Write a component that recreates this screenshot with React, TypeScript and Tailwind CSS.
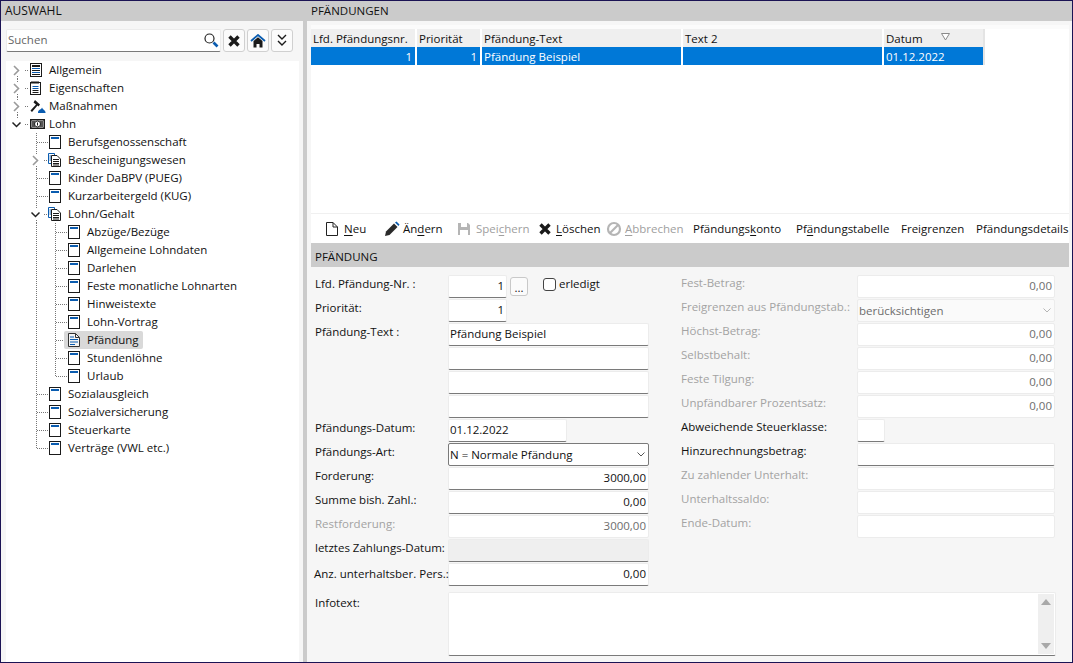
import React from "react";

const dark = "#1a1a1a";
const blue = "#0a5cb0";

function PageIcon() {
  return (
    <svg width="13" height="15" viewBox="0 0 13 15" className="shrink-0">
      <rect x="0.5" y="0.5" width="11" height="13" fill="#fff" stroke={dark} />
      <rect x="2" y="2" width="8" height="2" fill={blue} />
    </svg>
  );
}
function StackIcon() {
  return (
    <svg width="14" height="15" viewBox="0 0 14 15" className="-ml-[1px] shrink-0">
      <path d="M0.5 0.5H6.5V2M0.5 0.5V10.5H3" fill="none" stroke={blue} />
      <path d="M1.5 3H3M1.5 5H3M1.5 7H3" stroke={blue} />
      <path d="M3.5 2.5H9L12.5 6V13.5H3.5Z" fill="#fff" stroke={dark} />
      <path d="M5 6.5H11M5 8.5H11M5 10.5H11M5 12H11" stroke={dark} />
    </svg>
  );
}
function ActiveDocIcon() {
  return (
    <svg width="13" height="15" viewBox="0 0 13 15" className="shrink-0">
      <path d="M0.5 0.5H7.5L11.5 4.5V13.5H0.5Z" fill="#f4f4f4" stroke="#333" />
      <path d="M7.5 0.5V4.5H11.5" fill="none" stroke="#333" />
      <path d="M2 4H6M2 6.5H10M2 9H10M2 11.5H7" stroke={blue} strokeWidth="1.2" />
    </svg>
  );
}
function AllgemeinIcon() {
  return (
    <svg width="13" height="15" viewBox="0 0 13 15" className="shrink-0">
      <rect x="0.5" y="0.5" width="11" height="13" fill="#fff" stroke={dark} />
      <rect x="2" y="2" width="8" height="2" fill={dark} />
      <rect x="2" y="5" width="8" height="1" fill={blue} />
      <rect x="2" y="7" width="8" height="1" fill={dark} />
      <rect x="2" y="9" width="8" height="1" fill={blue} />
      <rect x="2" y="11" width="8" height="1" fill={dark} />
    </svg>
  );
}
function NotepadIcon() {
  return (
    <svg width="13" height="15" viewBox="0 0 13 15" className="shrink-0">
      <rect x="0.5" y="1.5" width="10" height="12" fill="#fff" stroke={dark} />
      <path d="M2 0V3M4 0V3M6 0V3M8 0V3" stroke={dark} />
      <path d="M2.5 5.5H8.5M2.5 7.5H8.5" stroke={blue} />
      <path d="M2.5 9.5H8.5M2.5 11.5H8.5" stroke={dark} />
    </svg>
  );
}
function HammerIcon() {
  return (
    <svg width="16" height="15" viewBox="0 0 16 15" className="shrink-0">
      <path d="M5 1L10 5.5L8.5 7.5L7.5 6.5L2 13L0.5 11.5L6 5.5L3.5 3.5Z" fill={dark} />
      <path d="M8 13C8.5 10.5 11.5 10.5 12 8.5C12.5 10.5 15 11 15.5 13V14H8Z" fill={blue} />
    </svg>
  );
}
function MoneyIcon() {
  return (
    <svg width="15" height="12" viewBox="0 0 15 12" className="shrink-0">
      <rect x="0.75" y="1.75" width="13.5" height="8.5" fill="#fff" stroke={dark} strokeWidth="1.5" />
      <path d="M2 3H5V9H2ZM10 3H13V9H10Z" fill="#555" />
      <circle cx="7.5" cy="6" r="3" fill="#fff" stroke={dark} />
      <path d="M7.5 4.5V7.5" stroke={dark} />
    </svg>
  );
}

type Guide = { x: number; from: number; to: number };
function TreeRow({
  level,
  label,
  icon,
  chevron,
  guides = [],
  selected,
}: {
  level: number;
  label: string;
  icon: React.ReactNode;
  chevron?: "open" | "closed";
  guides?: Guide[];
  selected?: boolean;
}) {
  const w = 24 + level * 19;
  const cx = 10.5 + level * 19;
  const hFrom = chevron ? 19 + level * 19 : 12 + level * 19;
  return (
    <div className="flex h-[18px] items-center">
      <svg width={w} height="18" className="shrink-0">
        {guides.map((g, i) => (
          <line key={i} x1={g.x + 0.5} x2={g.x + 0.5} y1={g.from} y2={g.to} stroke="#777" strokeDasharray="1 1" />
        ))}
        <line x1={hFrom} x2={w - 1} y1="9.5" y2="9.5" stroke="#777" strokeDasharray="1 1" />
        {chevron === "closed" && <path d={`M${cx - 2.5} 5L${cx + 2} 9.5L${cx - 2.5} 14`} fill="none" stroke="#9a9a9a" strokeWidth="1.6" />}
        {chevron === "open" && <path d={`M${cx - 4} 7.5L${cx} 11.5L${cx + 4} 7.5`} fill="none" stroke="#222" strokeWidth="1.5" />}
      </svg>
      <div
        className={
          selected
            ? "-ml-[4px] flex h-[18px] items-center rounded-[2px] bg-[#d9d9d9] pl-[4px] pr-[4px]"
            : "flex h-[18px] items-center"
        }
      >
        <span className="flex w-[19px] shrink-0 items-center">{icon}</span>
        <span className="whitespace-nowrap text-[#111]">{label}</span>
      </div>
    </div>
  );
}

const L0A: Guide = { x: 11, from: 15, to: 18 };
const L0B: Guide = { x: 11, from: 0, to: 3 };
const L1: Guide = { x: 30, from: 0, to: 18 };
const L1Chev: Guide[] = [
  { x: 30, from: 0, to: 3 },
  { x: 30, from: 15, to: 18 },
];
const L2: Guide = { x: 49, from: 0, to: 18 };

function Tree() {
  return (
    <div className="min-h-0 flex-1 bg-white">
      <TreeRow level={0} label="Allgemein" icon={<AllgemeinIcon />} chevron="closed" guides={[L0A]} />
      <TreeRow level={0} label="Eigenschaften" icon={<NotepadIcon />} chevron="closed" guides={[L0A, L0B]} />
      <TreeRow level={0} label="Maßnahmen" icon={<HammerIcon />} chevron="closed" guides={[L0A, L0B]} />
      <TreeRow level={0} label="Lohn" icon={<MoneyIcon />} chevron="open" guides={[L0B]} />
      <TreeRow level={1} label="Berufsgenossenschaft" icon={<PageIcon />} guides={[L1]} />
      <TreeRow level={1} label="Bescheinigungswesen" icon={<StackIcon />} chevron="closed" guides={L1Chev} />
      <TreeRow level={1} label="Kinder DaBPV (PUEG)" icon={<PageIcon />} guides={[L1]} />
      <TreeRow level={1} label="Kurzarbeitergeld (KUG)" icon={<PageIcon />} guides={[L1]} />
      <TreeRow level={1} label="Lohn/Gehalt" icon={<StackIcon />} chevron="open" guides={L1Chev} />
      {["Abzüge/Bezüge", "Allgemeine Lohndaten", "Darlehen", "Feste monatliche Lohnarten", "Hinweistexte", "Lohn-Vortrag"].map((t) => (
        <TreeRow key={t} level={2} label={t} icon={<PageIcon />} guides={[L1, L2]} />
      ))}
      <TreeRow level={2} label="Pfändung" icon={<ActiveDocIcon />} guides={[L1, L2]} selected />
      <TreeRow level={2} label="Stundenlöhne" icon={<PageIcon />} guides={[L1, L2]} />
      <TreeRow level={2} label="Urlaub" icon={<PageIcon />} guides={[L1, { x: 49, from: 0, to: 9 }]} />
      <TreeRow level={1} label="Sozialausgleich" icon={<PageIcon />} guides={[L1]} />
      <TreeRow level={1} label="Sozialversicherung" icon={<PageIcon />} guides={[L1]} />
      <TreeRow level={1} label="Steuerkarte" icon={<PageIcon />} guides={[L1]} />
      <TreeRow level={1} label="Verträge (VWL etc.)" icon={<PageIcon />} guides={[{ x: 30, from: 0, to: 9 }]} />
    </div>
  );
}

function IconButton({ children }: { children: React.ReactNode }) {
  return (
    <button className="flex h-[23px] w-[22px] items-center justify-center rounded-[3px] border border-[#d0d0d0] bg-[#fbfbfb]">
      {children}
    </button>
  );
}

function Field({
  w = "w-[201px]",
  value,
  right,
  disabled,
  variant,
  chevron,
}: {
  w?: string;
  value?: string;
  right?: boolean;
  disabled?: boolean;
  variant?: "dark" | "gray";
  chevron?: boolean;
}) {
  const border = disabled
    ? "border border-[#ececec]"
    : variant === "dark"
      ? "border border-[#7a7a7a]"
      : "border border-[#ececec] border-b-[#7a7a7a]";
  const bg = variant === "gray" ? "bg-[#efefef]" : disabled && chevron ? "bg-[#fafafa]" : "bg-white";
  return (
    <div
      className={`flex h-[23px] shrink-0 items-center rounded-[2px] pl-[1px] pr-[2px] ${chevron ? "" : "pb-[2px]"} ${w} ${border} ${bg} ${right ? "justify-end" : "justify-between"} ${disabled ? "text-[#6d6d6d]" : "text-[#111]"}`}
    >
      {value && <span className="whitespace-nowrap">{value}</span>}
      {chevron && (
        <svg width="8" height="5" viewBox="0 0 8 5" className="mr-[1px]">
          <path d="M0.5 0.5L4 4L7.5 0.5" fill="none" stroke={disabled ? "#b5b5b5" : "#555"} />
        </svg>
      )}
    </div>
  );
}

function Row({ label, labelClass, children }: { label: string; labelClass?: string; children: React.ReactNode }) {
  return (
    <div className="flex h-[24px] items-start">
      <div className={`w-[133px] shrink-0 whitespace-nowrap ${labelClass ?? "text-[#111]"}`}>{label}</div>
      {children}
    </div>
  );
}
function RRow({ label, muted, children }: { label: string; muted?: boolean; children: React.ReactNode }) {
  return (
    <div className="flex h-[24px] items-start">
      <div className={`-mt-[1px] w-[176px] shrink-0 whitespace-nowrap ${muted ? "text-[#a3a3a3]" : "text-[#111]"}`}>{label}</div>
      {children}
    </div>
  );
}

function U({ children }: { children: React.ReactNode }) {
  return <span className="underline underline-offset-2">{children}</span>;
}

function Cell({ w, right, children, cls }: { w: string; right?: boolean; children?: React.ReactNode; cls?: string }) {
  return (
    <div className={`flex h-full shrink-0 items-center whitespace-nowrap border-r-2 border-white pl-[2px] pr-[3px] pt-[1px] ${w} ${right ? "justify-end" : ""} ${cls ?? ""}`}>
      {children}
    </div>
  );
}

function ToolBtn({ icon, children, disabled, w }: { icon?: React.ReactNode; children: React.ReactNode; disabled?: boolean; w: string }) {
  return (
    <div className={`flex shrink-0 items-center whitespace-nowrap ${w} ${disabled ? "text-[#a0a0a0]" : "text-[#111]"}`}>
      {icon}
      <span>{children}</span>
    </div>
  );
}

export default function App() {
  return (
    <div
      className="flex h-[663px] w-[1073px] overflow-hidden border border-[#1b1354] bg-[#f6f6f6] text-[11.5px] leading-[18px] text-[#111]"
      style={{ fontFamily: '"Open Sans", "Noto Sans", sans-serif' }}
    >
      <div className="flex w-[302px] shrink-0 flex-col">
        <div className="flex h-[20px] shrink-0 items-center bg-[#cbcbcb] pl-[4px] text-[12px] uppercase">Auswahl</div>
        <div className="flex flex-1 flex-col pl-[5px] pr-[4px]">
          <div className="flex h-[40px] shrink-0 items-start gap-[2px] pt-[8px]">
            <div className="flex h-[23px] w-[215px] items-center justify-between rounded-[2px] border border-[#ececec] border-b-[#7a7a7a] bg-white pb-[1px] pl-[1px] pr-[1px] text-[#666]">
              <span>Suchen</span>
              <svg width="16" height="16" viewBox="0 0 16 16">
                <circle cx="6.5" cy="6.5" r="4.5" fill="#fff" stroke="#222" strokeWidth="1.2" />
                <path d="M10.5 10.5L14.5 14.5" stroke={blue} strokeWidth="2.6" />
              </svg>
            </div>
            <IconButton>
              <svg width="14" height="14" viewBox="0 0 14 14">
                <path d="M2.5 2.5L11.5 11.5M11.5 2.5L2.5 11.5" stroke="#1a1a1a" strokeWidth="3.4" />
              </svg>
            </IconButton>
            <IconButton>
              <svg width="16" height="14" viewBox="0 0 16 14">
                <path d="M1 7L8 1L15 7" fill="none" stroke={blue} strokeWidth="1.8" />
                <path d="M3.5 7L8 3.2L12.5 7V13.5H9.5V10H6.5V13.5H3.5Z" fill="#1a1a1a" />
              </svg>
            </IconButton>
            <IconButton>
              <svg width="12" height="14" viewBox="0 0 12 14">
                <path d="M2 1L6 5L10 1M2 7L6 11L10 7" fill="none" stroke="#1a1a1a" strokeWidth="1.4" />
              </svg>
            </IconButton>
          </div>
          <Tree />
        </div>
      </div>
      <div className="w-[4px] shrink-0 bg-[#cbcbcb]" />
      <div className="flex min-w-0 flex-1 flex-col">
        <div className="flex h-[20px] shrink-0 items-center bg-[#cbcbcb] pl-[4px]">PFÄNDUNGEN</div>
        <div className="h-[4px] shrink-0" />
        <div className="ml-[4px] mr-[3px] h-[4px] shrink-0 bg-[#fbfbfb]" />
        <div className="ml-[4px] mr-[3px] flex h-[185px] shrink-0 flex-col border-b border-[#f0f0f0] bg-white">
          <div className="flex h-[18px] w-[674px] shrink-0 bg-[#efefef]">
            <Cell w="w-[106px]">Lfd. Pfändungsnr.</Cell>
            <Cell w="w-[65px]">Priorität</Cell>
            <Cell w="w-[201px]">Pfändung-Text</Cell>
            <Cell w="w-[201px]">Text 2</Cell>
            <Cell w="w-[101px]" cls="justify-between border-r-[#e4e4e4]">
              <span>Datum</span>
              <svg width="9" height="8" viewBox="0 0 9 8" className="mb-[4px] mr-[30px]">
                <path d="M0.5 0.5H8.5L4.5 7Z" fill="#fff" stroke="#8a8a8a" />
              </svg>
            </Cell>
          </div>
          <div className="flex h-[18px] w-[674px] shrink-0 bg-[#0078d7] text-white">
            <Cell w="w-[106px]" right>1</Cell>
            <Cell w="w-[65px]" right>1</Cell>
            <Cell w="w-[201px]">Pfändung Beispiel</Cell>
            <Cell w="w-[201px]" />
            <Cell w="w-[101px]" cls="border-r-[#e4e4e4]">01.12.2022</Cell>
          </div>
        </div>
        <div className="ml-[4px] mr-[3px] flex h-[29px] shrink-0 items-center bg-white pl-[14px]">
          <ToolBtn
            w="w-[59px]"
            icon={
              <svg width="14" height="16" viewBox="0 0 14 16" className="mr-[5px]">
                <path d="M1.5 1.5H8L12.5 6V14.5H1.5Z" fill="#fff" stroke="#222" />
                <path d="M8 1.5V6H12.5" fill="none" stroke="#222" />
              </svg>
            }
          >
            <U>N</U>eu
          </ToolBtn>
          <ToolBtn
            w="w-[73px]"
            icon={
              <svg width="16" height="16" viewBox="0 0 16 16" className="mr-[3px]">
                <path d="M1 15L2 10.5L10 2.5L13.5 6L5.5 14Z" fill="#2a2a2a" />
                <path d="M11 1.5L12.5 0.5L15.5 3.5L14.5 5Z" fill={blue} />
              </svg>
            }
          >
            Än<U>d</U>ern
          </ToolBtn>
          <ToolBtn
            disabled
            w="w-[81px]"
            icon={
              <svg width="14" height="14" viewBox="0 0 14 14" className="mr-[5px]">
                <path d="M1 1H11L13 3V13H1Z" fill="#b5b5b5" />
                <rect x="4" y="1" width="6" height="4" fill="#fff" />
                <rect x="3" y="8" width="8" height="5" fill="#fff" />
              </svg>
            }
          >
            Spei<U>c</U>hern
          </ToolBtn>
          <ToolBtn
            w="w-[68px]"
            icon={
              <svg width="14" height="14" viewBox="0 0 14 14" className="mr-[4px]">
                <path d="M2.5 2.5L11.5 11.5M11.5 2.5L2.5 11.5" stroke="#1a1a1a" strokeWidth="3.4" />
              </svg>
            }
          >
            <U>L</U>öschen
          </ToolBtn>
          <ToolBtn
            disabled
            w="w-[87px]"
            icon={
              <svg width="16" height="16" viewBox="0 0 16 16" className="mr-[3px]">
                <circle cx="8" cy="8" r="6" fill="none" stroke="#b5b5b5" strokeWidth="2.2" />
                <path d="M4 12L12 4" stroke="#b5b5b5" strokeWidth="2.2" />
              </svg>
            }
          >
            <U>A</U>bbrechen
          </ToolBtn>
          <ToolBtn w="w-[103px]">Pfändungs<U>k</U>onto</ToolBtn>
          <ToolBtn w="w-[105px]">Pf<U>ä</U>ndungstabelle</ToolBtn>
          <ToolBtn w="w-[75px]">Frei<U>g</U>renzen</ToolBtn>
          <ToolBtn w="w-[92px]">Pfändungsdetails</ToolBtn>
        </div>
        <div className="ml-[4px] mr-[3px] flex h-[24px] shrink-0 items-center bg-[#cbcbcb] pl-[4px] pt-[3px]">PFÄNDUNG</div>
        <div className="flex-1 pl-[8px] pt-[8px]">
          <div className="flex gap-[32px]">
            <div className="w-[334px] shrink-0">
              <Row label="Lfd. Pfändung-Nr. :">
                <Field w="w-[59px]" value="1" right />
                <button className="ml-[3px] mt-[2px] flex h-[19px] w-[18px] items-end justify-center rounded-[3px] border border-[#c9c9c9] bg-[#fbfbfb] leading-[14px]">...</button>
                <div className="ml-[15px] flex items-center gap-[3px]">
                  <span className="h-[13px] w-[13px] rounded-[3px] border border-[#444] bg-white" />
                  <span>erledigt</span>
                </div>
              </Row>
              <Row label="Priorität:">
                <Field w="w-[59px]" value="1" right />
              </Row>
              <Row label="Pfändung-Text :">
                <Field value="Pfändung Beispiel" />
              </Row>
              <Row label="">
                <Field />
              </Row>
              <Row label="">
                <Field />
              </Row>
              <Row label="">
                <Field />
              </Row>
              <Row label="Pfändungs-Datum:">
                <Field w="w-[119px]" value="01.12.2022" />
              </Row>
              <Row label="Pfändungs-Art:">
                <Field value="N = Normale Pfändung" variant="dark" chevron />
              </Row>
              <Row label="Forderung:">
                <Field value="3000,00" right />
              </Row>
              <Row label="Summe bish. Zahl.:">
                <Field value="0,00" right />
              </Row>
              <Row label="Restforderung:" labelClass="text-[#a3a3a3]">
                <Field value="3000,00" right disabled />
              </Row>
              <Row label="letztes Zahlungs-Datum:">
                <Field variant="gray" />
              </Row>
              <Row label="Anz. unterhaltsber. Pers.:" labelClass="-translate-x-[1px] pt-[2px]">
                <Field value="0,00" right />
              </Row>
            </div>
            <div className="w-[374px] shrink-0">
              <RRow label="Fest-Betrag:" muted>
                <Field w="w-[198px]" value="0,00" right disabled />
              </RRow>
              <RRow label="Freigrenzen aus Pfändungstab.:" muted>
                <Field w="w-[198px]" value="berücksichtigen" disabled chevron />
              </RRow>
              <RRow label="Höchst-Betrag:" muted>
                <Field w="w-[198px]" value="0,00" right disabled />
              </RRow>
              <RRow label="Selbstbehalt:" muted>
                <Field w="w-[198px]" value="0,00" right disabled />
              </RRow>
              <RRow label="Feste Tilgung:" muted>
                <Field w="w-[198px]" value="0,00" right disabled />
              </RRow>
              <RRow label="Unpfändbarer Prozentsatz:" muted>
                <Field w="w-[198px]" value="0,00" right disabled />
              </RRow>
              <RRow label="Abweichende Steuerklasse:">
                <Field w="w-[28px]" />
              </RRow>
              <RRow label="Hinzurechnungsbetrag:">
                <Field w="w-[198px]" />
              </RRow>
              <RRow label="Zu zahlender Unterhalt:" muted>
                <Field w="w-[198px]" disabled />
              </RRow>
              <RRow label="Unterhaltssaldo:" muted>
                <Field w="w-[198px]" disabled />
              </RRow>
              <RRow label="Ende-Datum:" muted>
                <Field w="w-[198px]" disabled />
              </RRow>
            </div>
          </div>
          <div className="mt-[5px] flex">
            <div className="w-[133px] shrink-0 pt-[2px]">Infotext:</div>
            <div className="flex h-[64px] w-[608px] justify-end rounded-[2px] border border-[#ececec] border-b-[#7a7a7a] bg-white p-[1px]">
              <div className="flex h-full w-[16px] flex-col items-center justify-between bg-[#efefef] py-[5px]">
                <svg width="10" height="6" viewBox="0 0 10 6"><path d="M5 0L10 6H0Z" fill="#a8a8a8" /></svg>
                <svg width="10" height="6" viewBox="0 0 10 6"><path d="M0 0H10L5 6Z" fill="#a8a8a8" /></svg>
              </div>
            </div>
          </div>
        </div>
      </div>
    </div>
  );
}
